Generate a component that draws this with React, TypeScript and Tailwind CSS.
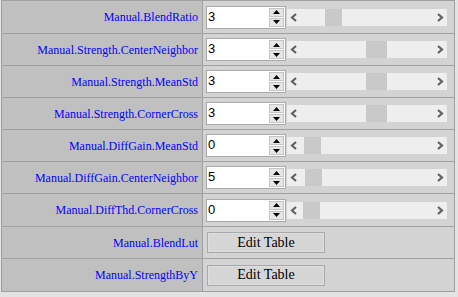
import React from "react";

type Row = {
  label: string;
  h: string;
  kind: "num" | "btn";
  value?: string;
  thumbLeft?: number;
  thumbW?: number;
};

const rows: Row[] = [
  { label: "Manual.BlendRatio", h: "h-[32px]", kind: "num", value: "3", thumbLeft: 38, thumbW: 17 },
  { label: "Manual.Strength.CenterNeighbor", h: "h-[31px]", kind: "num", value: "3", thumbLeft: 79, thumbW: 21 },
  { label: "Manual.Strength.MeanStd", h: "h-[31px]", kind: "num", value: "3", thumbLeft: 79, thumbW: 21 },
  { label: "Manual.Strength.CornerCross", h: "h-[31px]", kind: "num", value: "3", thumbLeft: 79, thumbW: 21 },
  { label: "Manual.DiffGain.MeanStd", h: "h-[31px]", kind: "num", value: "0", thumbLeft: 17, thumbW: 17 },
  { label: "Manual.DiffGain.CenterNeighbor", h: "h-[31px]", kind: "num", value: "5", thumbLeft: 18, thumbW: 17 },
  { label: "Manual.DiffThd.CornerCross", h: "h-[32px]", kind: "num", value: "0", thumbLeft: 16, thumbW: 17 },
  { label: "Manual.BlendLut", h: "h-[31px]", kind: "btn" },
  { label: "Manual.StrengthByY", h: "h-[32px]", kind: "btn" },
];

function Chevron({ dir }: { dir: "l" | "r" }) {
  return (
    <svg width="8" height="9" viewBox="0 0 8 9" className="block">
      {dir === "l" ? (
        <polyline points="6,1 2,4.5 6,8" fill="none" stroke="#606060" strokeWidth="2.2" />
      ) : (
        <polyline points="2,1 6,4.5 2,8" fill="none" stroke="#606060" strokeWidth="2.2" />
      )}
    </svg>
  );
}

function NumInput({ value }: { value: string }) {
  return (
    <div className="relative w-[80px] h-[23px] border border-[#a9a9a9] bg-white">
      <span className="absolute left-[1px] top-[2px] text-[13px] leading-[16px] text-black font-[family-name:'Liberation_Sans',Arial,sans-serif]">
        {value}
      </span>
      <div className="absolute right-[1px] top-[1px] w-[15px] h-[19px] flex flex-col gap-[1px]">
        <div className="flex-1 bg-[#e6e6e6] border border-[#c4c4c4] flex items-center justify-center">
          <svg width="7" height="4" viewBox="0 0 7 4" className="block">
            <polygon points="3.5,0 7,4 0,4" fill="#000" />
          </svg>
        </div>
        <div className="flex-1 bg-[#e6e6e6] border border-[#c4c4c4] flex items-center justify-center">
          <svg width="7" height="4" viewBox="0 0 7 4" className="block">
            <polygon points="0,0 7,0 3.5,4" fill="#000" />
          </svg>
        </div>
      </div>
    </div>
  );
}

function Slider({ left, w }: { left: number; w: number }) {
  return (
    <div className="relative ml-[1px] w-[160px] h-[17px] bg-[#eeeeee] flex items-center justify-between px-[3px]">
      <Chevron dir="l" />
      <div
        className="absolute top-0 h-[17px] bg-[#c9c9c9]"
        style={{ left: left, width: w }}
      />
      <Chevron dir="r" />
    </div>
  );
}

function EditButton() {
  return (
    <div className="w-[118px] h-[21px] border border-[#a9a9a9] bg-[#d6d6d6] flex items-center justify-center">
      <div className="w-full h-full border border-[#dedede] flex items-center justify-center text-[14px] leading-none text-black font-[family-name:'Liberation_Serif',serif]">
        Edit Table
      </div>
    </div>
  );
}

export default function App() {
  return (
    <div className="w-[458px] h-[297px] bg-[#e3e3e3] overflow-hidden">
      <div className="ml-[1px] w-[454px] border border-[#a0a0a0] flex flex-col">
        {rows.map((r, i) => (
          <div
            key={r.label}
            className={`flex ${r.h} ${i < rows.length - 1 ? "border-b border-[#a0a0a0]" : ""} box-content`}
          >
            <div className="w-[201px] shrink-0 bg-[#c0c0c0] border-r border-[#a0a0a0] flex items-center justify-end pr-[4px] text-[12px] text-[#0000ff] font-[family-name:'Liberation_Serif',serif]">
              {r.label}
            </div>
            <div className="flex-1 bg-[#d3d3d3] flex items-center pl-[3px]">
              {r.kind === "num" ? (
                <>
                  <NumInput value={r.value!} />
                  <Slider left={r.thumbLeft!} w={r.thumbW!} />
                </>
              ) : (
                <div className="pl-[1px]">
                  <EditButton />
                </div>
              )}
            </div>
          </div>
        ))}
      </div>
    </div>
  );
}
